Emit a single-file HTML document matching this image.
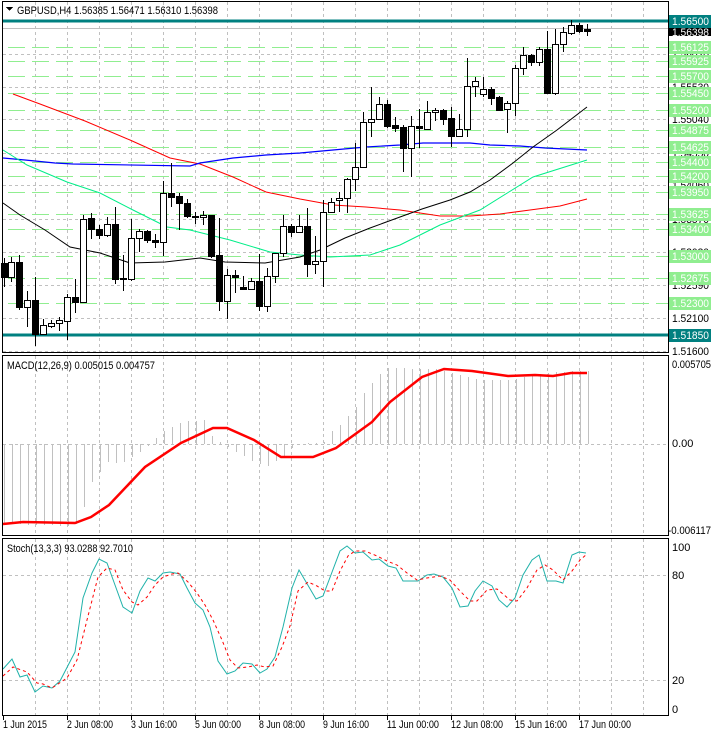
<!DOCTYPE html>
<html><head><meta charset="utf-8"><style>
html,body{margin:0;padding:0;background:#fff;}
body{width:711px;height:733px;overflow:hidden;font-family:"Liberation Sans",sans-serif;}
svg text{font-family:"Liberation Sans",sans-serif;font-size:11px;}
</style></head><body>
<svg id="s" width="711" height="733" xmlns="http://www.w3.org/2000/svg" shape-rendering="crispEdges">
<rect width="711" height="733" fill="#fff"/>
<g id="grid" stroke="#c0c0c0" stroke-dasharray="3,3" stroke-width="1"></g>
<g id="green" stroke="#90ee90" stroke-dasharray="17,7" stroke-width="1"></g>
<line x1="3" y1="21" x2="668" y2="21" stroke="#008080" stroke-width="3"/>
<line x1="3" y1="335" x2="668" y2="335" stroke="#008080" stroke-width="3"/>
<line x1="3" y1="28.5" x2="668" y2="28.5" stroke="#c0c0c0" stroke-width="1"/>
<g id="hist" stroke="#c0c0c0" stroke-width="1"></g>
<g id="lines" fill="none" shape-rendering="auto"></g>
<g id="candles" stroke="#000" stroke-width="1"></g>
<g fill="none" stroke="#000" stroke-width="1">
<rect x="2.5" y="1.5" width="666" height="351"/>
<rect x="2.5" y="355.5" width="666" height="180"/>
<rect x="2.5" y="538.5" width="666" height="177"/>
</g>
<g id="ticks" stroke="#000"></g>
<polygon points="6,7 13,7 9.5,11" fill="#000"/>
<text x="17" y="14" fill="#000" textLength="201" lengthAdjust="spacingAndGlyphs">GBPUSD,H4  1.56385 1.56471 1.56310 1.56398</text>
<text x="7" y="369" fill="#000" textLength="148" lengthAdjust="spacingAndGlyphs">MACD(12,26,9) 0.005015 0.004757</text>
<text x="7" y="552" fill="#000" textLength="126" lengthAdjust="spacingAndGlyphs">Stoch(13,3,3) 93.0288 92.7010</text>
<g fill="#000" id="axis">
<text x="672" y="58">1.56020</text>
<text x="672" y="91">1.55530</text>
<text x="672" y="123">1.55040</text>
<text x="672" y="157">1.54550</text>
<text x="672" y="189">1.54060</text>
<text x="672" y="223">1.53570</text>
<text x="672" y="256">1.53080</text>
<text x="672" y="289">1.52590</text>
<text x="672" y="322">1.52100</text>
<text x="672" y="355">1.51600</text>
</g>
<g fill="#000">
<text x="672" y="368" textLength="39" lengthAdjust="spacingAndGlyphs">0.005705</text>
<text x="672" y="447">0.00</text>
<text x="668" y="534" textLength="43" lengthAdjust="spacingAndGlyphs">-0.006117</text>
<text x="672" y="551">100</text>
<text x="672" y="579">80</text>
<text x="672" y="684">20</text>
<text x="672" y="713">0</text>
</g>
<g id="labels"></g>
<g fill="#000" lengthAdjust="spacingAndGlyphs">
<text x="3" y="728" textLength="44" lengthAdjust="spacingAndGlyphs">1 Jun 2015</text>
<text x="67" y="728" textLength="46" lengthAdjust="spacingAndGlyphs">2 Jun 08:00</text>
<text x="131" y="728" textLength="46" lengthAdjust="spacingAndGlyphs">3 Jun 16:00</text>
<text x="195" y="728" textLength="46" lengthAdjust="spacingAndGlyphs">5 Jun 00:00</text>
<text x="259" y="728" textLength="46" lengthAdjust="spacingAndGlyphs">8 Jun 08:00</text>
<text x="323" y="728" textLength="46" lengthAdjust="spacingAndGlyphs">9 Jun 16:00</text>
<text x="387" y="728" textLength="52" lengthAdjust="spacingAndGlyphs">11 Jun 00:00</text>
<text x="451" y="728" textLength="52" lengthAdjust="spacingAndGlyphs">12 Jun 08:00</text>
<text x="515" y="728" textLength="52" lengthAdjust="spacingAndGlyphs">15 Jun 16:00</text>
<text x="579" y="728" textLength="52" lengthAdjust="spacingAndGlyphs">17 Jun 00:00</text>
</g>
</svg>
<script>
var NS="http://www.w3.org/2000/svg";
function el(p,t,a,txt){var e=document.createElementNS(NS,t);for(var k in a)e.setAttribute(k,a[k]);if(txt)e.textContent=txt;document.getElementById(p).appendChild(e);return e;}
var ax=document.getElementById("axis").getElementsByTagName("text");
for(var i=0;i<ax.length;i++){ax[i].setAttribute("textLength","37");ax[i].setAttribute("lengthAdjust","spacingAndGlyphs");}
for(var x=35;x<=643;x+=32){
 el("grid","line",{x1:x+.5,y1:2,x2:x+.5,y2:352});
 el("grid","line",{x1:x+.5,y1:356,x2:x+.5,y2:535});
 el("grid","line",{x1:x+.5,y1:539,x2:x+.5,y2:715});
}
[54,87,119,153,185,219,252,285,318,351].forEach(function(y){el("grid","line",{x1:3,y1:y+.5,x2:668,y2:y+.5});});
[444].forEach(function(y){el("grid","line",{x1:3,y1:y+.5,x2:668,y2:y+.5});});
[575,680].forEach(function(y){el("grid","line",{x1:3,y1:y+.5,x2:668,y2:y+.5});});
var G=[[47,"1.56125"],[60.5,"1.55925"],[75.5,"1.55700"],[92.5,"1.55450"],[109.5,"1.55200"],[130,"1.54875"],[147,"1.54625"],[162,"1.54400"],[175.5,"1.54200"],[192,"1.53950"],[214,"1.53625"],[229,"1.53400"],[256,"1.53000"],[278,"1.52675"],[303,"1.52300"]];
function lab(y,txt,col,tc){el("labels","rect",{x:669,y:y-6,width:42,height:13,fill:col});
 el("labels","text",{x:672,y:y+4,fill:tc,textLength:"37",lengthAdjust:"spacingAndGlyphs"},txt);}
G.forEach(function(g){var y=Math.round(g[0]);el("green","line",{x1:8,y1:y+.5,x2:668,y2:y+.5});lab(y,g[1],"#90ee90","#fff");});
lab(21,"1.56500","#008080","#fff");
el("labels","rect",{x:669,y:28,width:42,height:8,fill:"#000"});
el("labels","text",{x:672,y:36,fill:"#fff",textLength:"37",lengthAdjust:"spacingAndGlyphs"},"1.56398");
lab(335,"1.51850","#008080","#fff");
[3,67,131,195,259,323,387,451,515,579].forEach(function(x){el("ticks","line",{x1:x+.5,y1:716,x2:x+.5,y2:720});});
var H=[[5,524],[75,526],[84,507],[91,483],[100,472],[107,462],[122,463],[131,458],[140,452],[150,444],[163,432],[172,427],[181,422],[204,420],[211,435],[220,442],[236,452],[254,462],[267,467],[286,455],[295,444],[324,442],[331,432],[340,425],[347,417],[356,407],[363,394],[372,383],[381,373],[388,368],[435,369],[460,375],[480,380],[508,380],[530,376],[553,372],[589,371]];
function interp(P,x){for(var i=1;i<P.length;i++){if(x<=P[i][0]){var a=P[i-1],b=P[i];return a[1]+(b[1]-a[1])*(x-a[0])/(b[0]-a[0]);}}return P[P.length-1][1];}
for(var x=4;x<=588;x+=8){var y=Math.round(interp(H,x));el("hist","line",{x1:x+.5,y1:444,x2:x+.5,y2:y});}
function pl(pts,attrs){var a={points:pts.map(function(p){return p.join(",")}).join(" ")};for(var k in attrs)a[k]=attrs[k];el("lines","polyline",a);}
pl([[13,94],[40,104],[85,121],[130,140],[170,158],[200,164],[233,177],[266,192],[300,199],[333,205],[366,207],[400,210],[440,216],[470,216],[500,214],[530,210],[560,206],[587,199]],{stroke:"#ff0000","stroke-width":1});
pl([[3,158],[25,160],[55,163],[73,164],[190,166],[200,163],[233,158],[266,155],[300,153],[333,150],[366,147],[400,145],[423,143],[470,143],[490,145],[520,146],[545,148],[587,150]],{stroke:"#0000ff","stroke-width":1.2});
pl([[3,150],[27,165],[67,182],[100,193],[133,210],[167,227],[190,230],[230,240],[270,252],[300,255],[330,257],[370,255],[400,245],[440,225],[480,210],[533,177],[587,160]],{stroke:"#00ee88","stroke-width":1});
pl([[3,203],[20,215],[45,230],[70,247],[100,253],[130,263],[165,262],[200,258],[225,262],[265,263],[300,257],[320,250],[345,238],[370,228],[400,217],[422,209],[450,200],[470,192],[490,180],[513,163],[533,147],[557,130],[587,107]],{stroke:"#000","stroke-width":1});
pl([[3,524],[23,522],[75,523],[91,517],[109,505],[145,467],[181,443],[213,428],[227,428],[254,440],[281,457],[313,457],[336,448],[372,422],[390,402],[422,377],[444,369],[472,371],[508,376],[535,375],[553,376],[571,373],[587,373]],{stroke:"#ff0000","stroke-width":2.5});
pl([[3,669],[12,659],[20,677],[27,675],[35,692],[43,686],[52,688],[60,681],[75,652],[83,598],[92,573],[99,559],[107,563],[115,585],[123,607],[132,613],[140,591],[148,578],[155,581],[163,573],[170,572],[180,574],[187,588],[195,603],[203,610],[210,627],[218,661],[227,674],[235,671],[243,663],[252,664],[260,673],[267,669],[275,657],[283,627],[292,588],[299,570],[316,599],[323,596],[340,551],[347,546],[355,553],[363,552],[372,560],[379,559],[388,566],[396,568],[403,581],[418,581],[427,575],[434,574],[443,577],[452,588],[460,607],[468,606],[475,591],[483,581],[492,586],[499,600],[507,607],[515,598],[523,575],[532,560],[539,555],[547,581],[556,581],[563,583],[572,555],[579,552],[586,553]],{stroke:"#20b2aa","stroke-width":1});
pl([[3,676],[13,667],[27,672],[37,683],[43,684],[52,688],[67,678],[77,660],[87,620],[98,577],[107,568],[115,570],[123,590],[132,602],[138,605],[147,597],[155,585],[163,577],[172,574],[178,573],[188,582],[197,593],[205,605],[213,620],[222,640],[230,660],[238,668],[248,667],[257,665],[265,667],[273,666],[282,647],[290,626],[298,591],[308,582],[317,586],[325,591],[332,591],[340,571],[348,556],[355,551],[365,551],[377,556],[387,561],[397,565],[407,573],[417,580],[427,578],[440,576],[450,580],[460,591],[470,601],[477,601],[487,590],[497,589],[510,600],[517,601],[527,588],[537,570],[545,565],[553,570],[563,580],[572,571],[580,560],[587,554]],{stroke:"#ff0000","stroke-width":1,"stroke-dasharray":"3,3"});
var C=[[4,258,263,277,287,0],[11,257,262,277,282,1],[19,255,262,307,310,0],[27,291,300,307,327,1],[35,277,300,334,346,0],[43,319,325,334,335,1],[51,320,323,326,328,1],[59,317,320,323,331,1],[67,294,297,321,340,1],[75,279,297,302,313,0],[83,215,219,302,303,1],[91,213,218,229,239,0],[99,225,229,235,239,0],[107,217,224,235,237,1],[115,207,224,279,284,0],[123,255,278,279,291,0],[131,219,238,279,281,1],[139,229,231,238,252,1],[147,230,231,240,243,0],[155,234,240,242,248,0],[163,181,193,242,256,1],[171,163,193,197,207,0],[179,193,196,203,230,0],[187,199,203,216,218,0],[195,212,216,217,224,0],[203,211,215,217,225,1],[211,215,215,256,258,0],[219,218,255,301,311,0],[227,269,275,301,319,1],[235,270,275,277,293,0],[243,276,287,289,290,0],[251,278,281,289,290,1],[259,254,281,306,311,0],[267,268,276,306,312,1],[275,253,253,276,283,1],[283,215,226,253,257,1],[291,224,226,232,237,0],[299,215,226,232,233,1],[307,208,226,264,277,0],[315,236,261,264,274,1],[323,200,212,261,287,1],[331,198,202,212,213,1],[339,192,198,200,212,1],[347,178,179,198,213,1],[355,143,167,179,191,1],[363,112,122,167,167,1],[371,87,119,122,137,1],[379,97,104,119,120,1],[387,100,104,126,128,0],[395,117,125,128,132,0],[403,125,127,148,172,0],[411,116,126,148,177,1],[419,109,126,128,148,0],[427,101,112,129,130,1],[435,108,110,112,121,1],[443,109,110,119,125,0],[451,107,118,136,147,0],[459,114,129,136,137,1],[467,58,86,129,137,1],[475,77,81,86,97,1],[483,77,89,94,97,1],[491,87,89,98,105,0],[499,96,97,110,111,0],[507,101,103,109,133,1],[515,65,68,103,116,1],[523,47,55,68,75,1],[531,54,55,62,66,0],[539,47,49,62,66,1],[547,31,49,93,93,0],[555,29,44,93,95,1],[563,27,32,44,52,1],[571,20,25,33,35,1],[579,23,25,31,33,0],[587,24,29,31,36,0]];
C.forEach(function(c){var x=c[0];
 el("candles","line",{x1:x+.5,y1:c[1],x2:x+.5,y2:c[4]});
 var h=Math.max(1,c[3]-c[2]);
 el("candles","rect",{x:x-2.5,y:c[2]+.5,width:6,height:h,fill:c[5]?"#fff":"#000"});
});
</script>
</body></html>
